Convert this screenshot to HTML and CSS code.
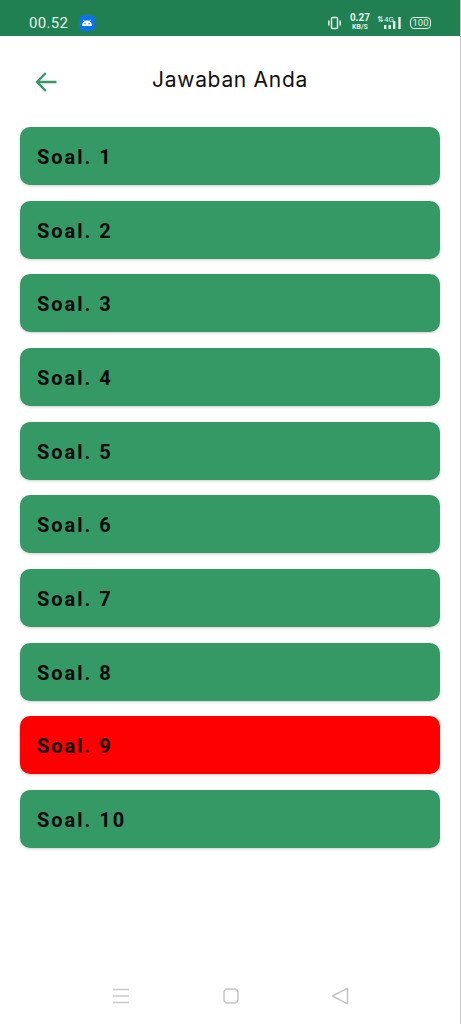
FILE: index.html
```html
<!DOCTYPE html>
<html lang="id">
<head>
  <meta charset="UTF-8" />
  <meta name="viewport" content="width=device-width, initial-scale=1.0" />
  <title>Jawaban Anda</title>
  <link rel="stylesheet" href="styles.css">
</head>
<body>
  <div class="statusbar">
    <div class="status-left">
      <span class="clock">00.52</span>
      <span class="app-badge">
        <svg width="12" height="9" viewBox="0 0 12 9"><path d="M1 8C1 5 3 2.6 6 2.6S11 5 11 8Z" fill="#fff"/><path d="M3.4 3.4 2.4 1.6M8.6 3.4 9.6 1.6" stroke="#fff" stroke-width=".8"/><circle cx="4" cy="5.8" r=".7" fill="#0b72ea"/><circle cx="8" cy="5.8" r=".7" fill="#0b72ea"/></svg>
      </span>
    </div>
    <div class="status-right">
      <svg width="13" height="14" viewBox="0 0 13 14" fill="none" stroke="#e4f0e8"><rect x="3.5" y="1.5" width="6" height="11" rx="1" stroke-width="1.5"/><path d="M.8 4.5v5M12.2 4.5v5" stroke-width="1.5"/></svg>
      <span class="speed"><b>0.27</b><b class="unit">KB/S</b></span>
      <span class="network">
        <span class="net-label">⇅4G</span>
        <svg width="17" height="14" viewBox="0 0 17 14" fill="#e4f0e8"><rect x="0" y="9" width="2.4" height="4"/><rect x="4.5" y="9" width="2.4" height="4"/><rect x="9" y="5" width="2.4" height="8"/><rect x="14.3" y="1" width="2.4" height="12"/></svg>
      </span>
      <span class="battery">100</span>
    </div>
  </div>

  <header class="topbar">
    <a class="back" href="#">
      <svg width="22" height="22" viewBox="0 0 22 22" fill="none" stroke="#359966" stroke-width="2.4"><path d="M21.5 11H2M10.8 2 2 11l8.8 9"/></svg>
    </a>
    <h1>Jawaban Anda</h1>
  </header>

  <div class="entries">
    <div class="entry">Soal. 1</div>
    <div class="entry">Soal. 2</div>
    <div class="entry">Soal. 3</div>
    <div class="entry">Soal. 4</div>
    <div class="entry">Soal. 5</div>
    <div class="entry">Soal. 6</div>
    <div class="entry">Soal. 7</div>
    <div class="entry">Soal. 8</div>
    <div class="entry wrong">Soal. 9</div>
    <div class="entry">Soal. 10</div>
  </div>

  <nav class="navbar">
    <svg width="18" height="16" viewBox="0 0 18 16" fill="none" stroke="#c9c9c9" stroke-width="1.5"><path d="M1 1.5h16M1 8h16M1 14.5h16"/></svg>
    <svg width="16" height="16" viewBox="0 0 16 16" fill="none" stroke="#c4c4c4" stroke-width="1.5"><rect x="1" y="1" width="14" height="14" rx="3.5"/></svg>
    <svg width="18" height="18" viewBox="0 0 18 18" fill="none" stroke="#c4c4c4" stroke-width="1.5" stroke-linejoin="round"><path d="M16.5 1.2V16.8L1.5 9Z"/></svg>
  </nav>
</body>
</html>
```

FILE: styles.css
```css
:root {
  --status: #218051;
  --green: #359966;
  --red: #ff0000;
}

body {
  margin: 0;
  height: 1024px;
  background: #fff;
  border-right: 1px solid #c8c8c8;
  box-sizing: border-box;
  display: flex;
  flex-direction: column;
  overflow: hidden;
  font-family: Roboto, sans-serif;
}

.statusbar {
  height: 36px;
  flex-shrink: 0;
  background: var(--status);
  color: #e4f0e8;
  display: flex;
  justify-content: space-between;
  align-items: center;
  padding: 9px 29px 0 29px;
  box-sizing: border-box;
}

.status-left,
.status-right {
  display: flex;
  align-items: center;
}

.clock {
  font-size: 15px;
  letter-spacing: 0.3px;
}

.app-badge {
  width: 16px;
  height: 16px;
  margin-left: 11px;
  background: #0b72ea;
  border-radius: 5px;
  display: flex;
  align-items: center;
  justify-content: center;
}

.speed {
  display: flex;
  flex-direction: column;
  align-items: center;
  margin-left: 9px;
  font-size: 10px;
  line-height: 8.5px;
}

.speed .unit {
  font-size: 7px;
}

.network {
  position: relative;
  display: flex;
  margin-left: 7px;
}

.net-label {
  position: absolute;
  left: 0;
  top: 0;
  font-size: 8px;
  line-height: 8px;
  white-space: nowrap;
}

.network svg {
  margin-left: 7px;
}

.battery {
  width: 19px;
  height: 10px;
  margin-left: 9px;
  border: 1px solid #e4f0e8;
  border-radius: 4px;
  font-size: 9.5px;
  line-height: 10px;
  text-align: center;
}

.topbar {
  position: relative;
  height: 91px;
  flex-shrink: 0;
  display: flex;
  align-items: center;
  justify-content: center;
  padding-bottom: 4px;
  box-sizing: border-box;
}

.back {
  position: absolute;
  left: 35px;
  top: 35px;
  height: 22px;
}

.topbar h1 {
  margin: 0;
  font-family: "Inter", sans-serif;
  font-size: 21px;
  font-weight: 400;
  letter-spacing: 0.7px;
  color: #111;
}

.entries {
  display: flex;
  flex-direction: column;
  gap: 15.67px;
  padding: 0 20px;
}

.entry {
  height: 58px;
  display: flex;
  align-items: center;
  padding-left: 17px;
  padding-top: 2px;
  box-sizing: border-box;
  background: var(--green);
  border-radius: 10px;
  box-shadow: 0 1px 3px rgba(0, 0, 0, 0.2);
  color: #0a0a0a;
  font-size: 20px;
  font-weight: 700;
  letter-spacing: 2px;
}

.wrong {
  background: var(--red);
}

.navbar {
  margin-top: auto;
  height: 56px;
  display: flex;
  align-items: center;
  justify-content: space-between;
  padding: 0 111px 0 112px;
  box-sizing: border-box;
}
```
